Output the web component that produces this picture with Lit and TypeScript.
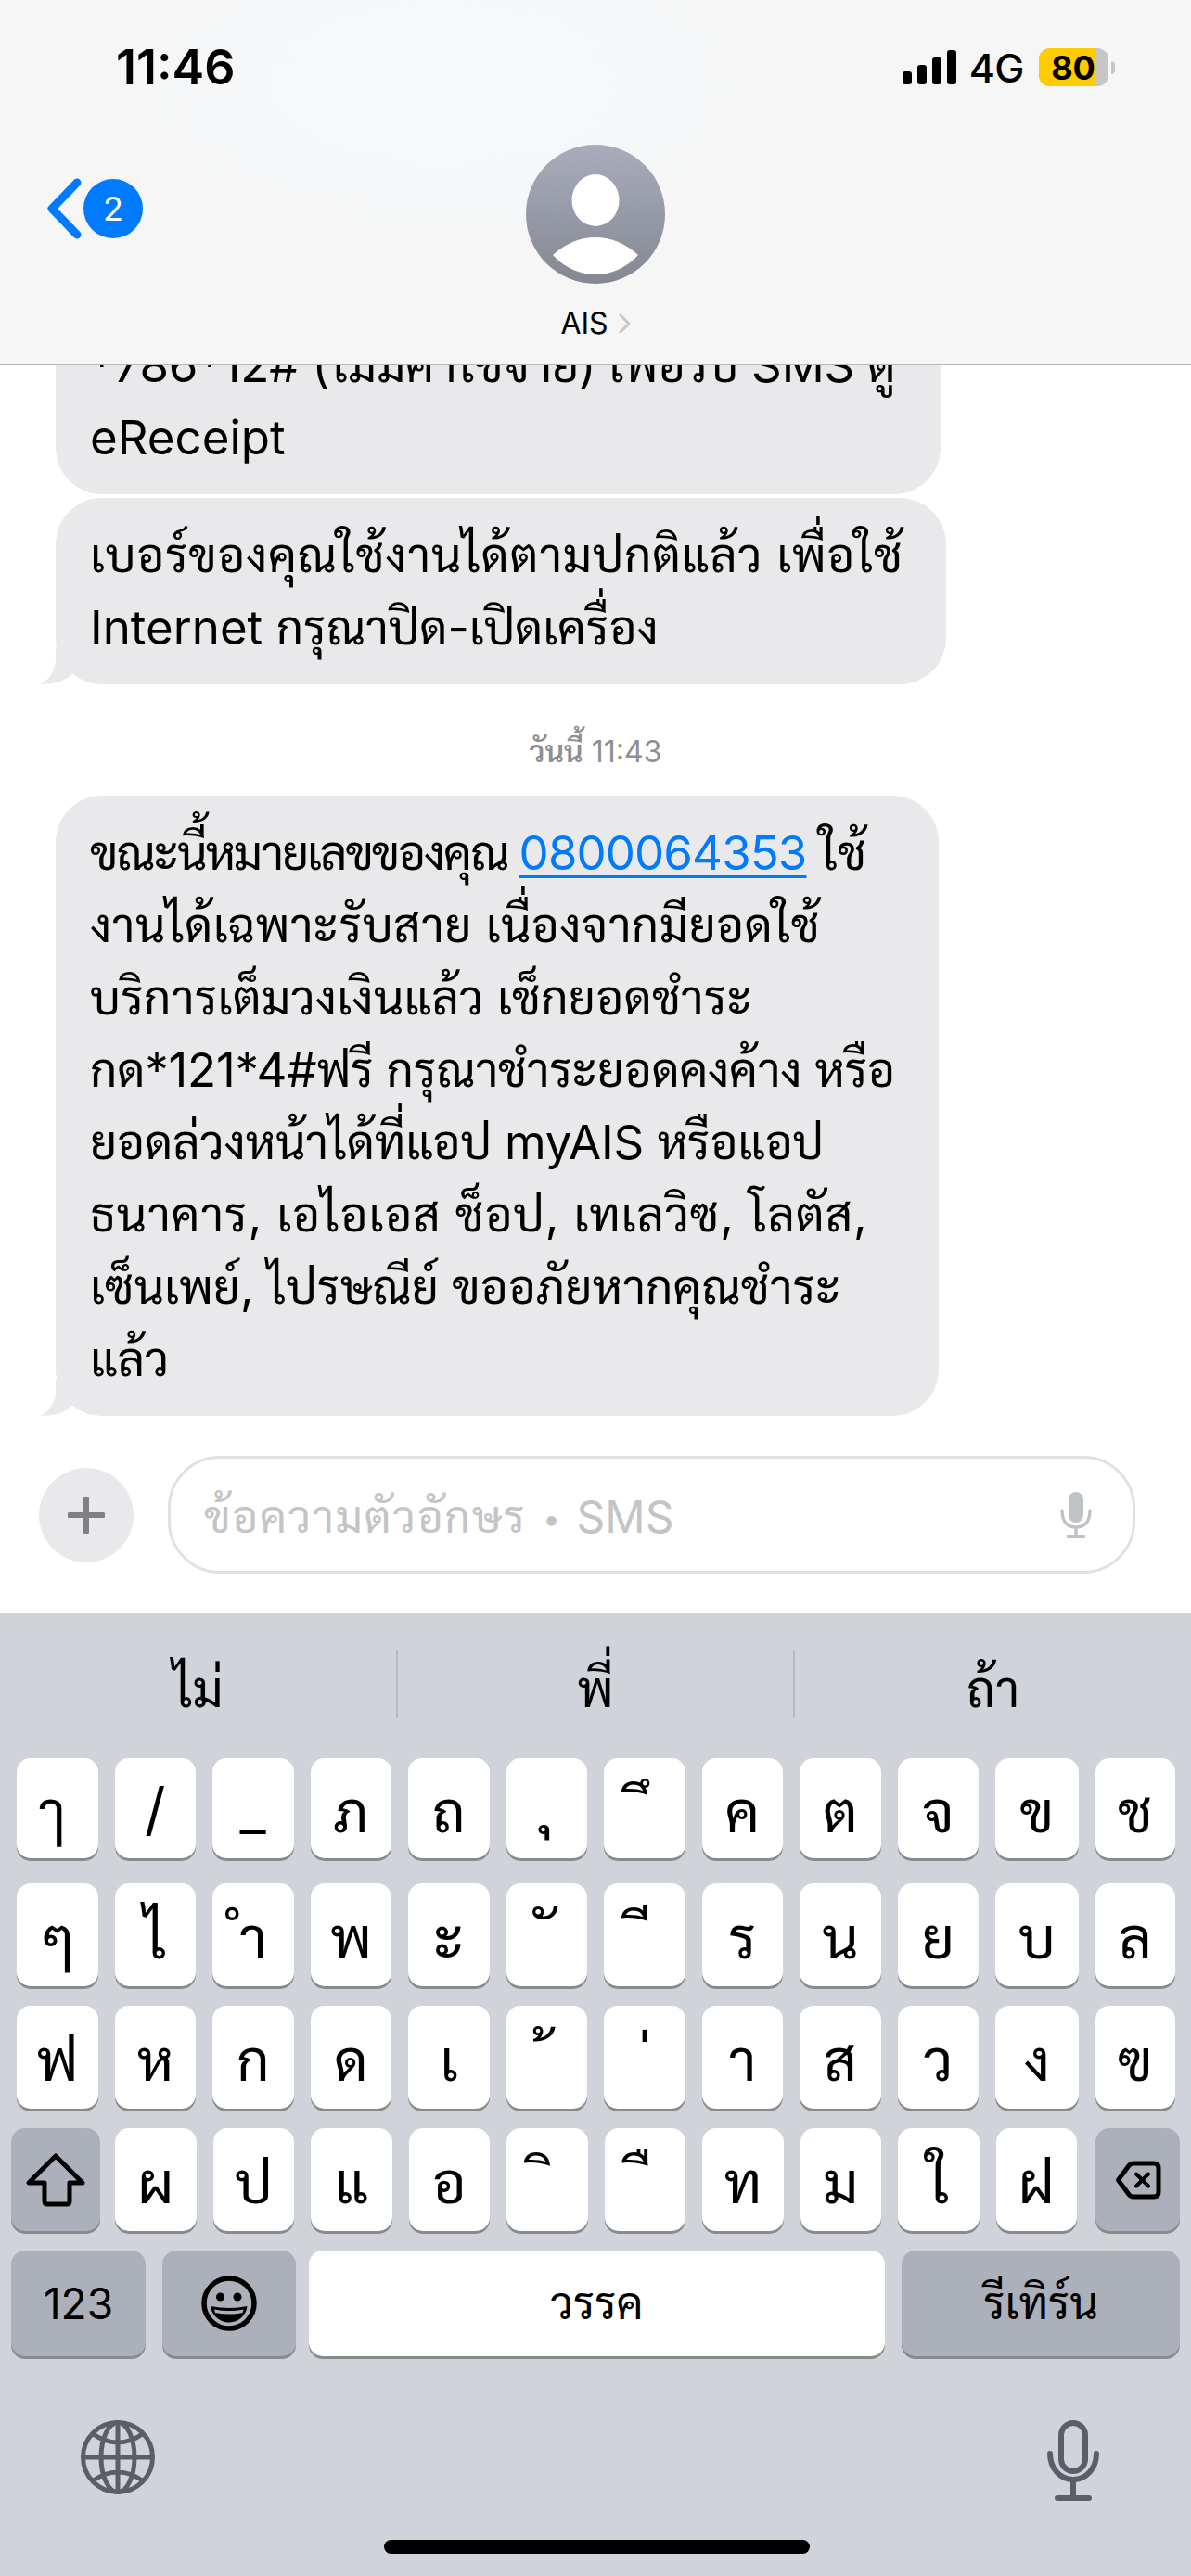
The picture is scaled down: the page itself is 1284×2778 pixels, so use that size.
import { css, html, LitElement, svg } from 'lit'
import { customElement } from 'lit/decorators.js'

const MARK = '\u00a0'
const BELOW = MARK + 'ุ'

const ROW_1 = ['ๅ', '/', '_', 'ภ', 'ถ', BELOW, MARK + 'ึ', 'ค', 'ต', 'จ', 'ข', 'ช']
const ROW_2 = ['ๆ', 'ไ', 'ำ', 'พ', 'ะ', MARK + 'ั', MARK + 'ี', 'ร', 'น', 'ย', 'บ', 'ล']
const ROW_3 = ['ฟ', 'ห', 'ก', 'ด', 'เ', MARK + '้', MARK + '่', 'า', 'ส', 'ว', 'ง', 'ฃ']
const ROW_4 = ['ผ', 'ป', 'แ', 'อ', MARK + 'ิ', MARK + 'ื', 'ท', 'ม', 'ใ', 'ฝ']

// [text, letter-spacing in px]: the fallback Thai font runs wider or narrower than the original per line
type Line = [string, number]

const FIRST_BUBBLE: Line[] = [
  ['*786*12# (ไม่มีค่าใช้จ่าย) เพื่อรับ SMS ดู', -0.15],
  ['eReceipt', 0],
]
const SECOND_BUBBLE: Line[] = [
  ['เบอร์ของคุณใช้งานได้ตามปกติแล้ว เพื่อใช้', 0.75],
  ['Internet กรุณาปิด-เปิดเครื่อง', 0],
]
const THIRD_BUBBLE: Line[] = [
  ['งานได้เฉพาะรับสาย เนื่องจากมียอดใช้', 0.45],
  ['บริการเต็มวงเงินแล้ว เช็กยอดชำระ', 0.25],
  ['กด*121*4#ฟรี กรุณาชำระยอดคงค้าง หรือ', -0.2],
  ['ยอดล่วงหน้าได้ที่แอป myAIS หรือแอป', -0.1],
  ['ธนาคาร, เอไอเอส ช็อป, เทเลวิซ, โลตัส,', 0.9],
  ['เซ็นเพย์, ไปรษณีย์ ขออภัยหากคุณชำระ', 0.1],
  ['แล้ว', 0],
]

const tail = html`<svg class="tail" width="60" height="40" viewBox="0 0 60 40">
  <path d="M17 0V13C17 26 9 36 0 40C14 40 27 37 36 28V0Z" fill="#e9e9eb" />
</svg>`

@customElement('app-root')
export class AppRoot extends LitElement {
  static styles = css`
    :host {
      display: block;
      width: 1284px;
      height: 2778px;
      overflow: hidden;
      background: #fff;
      color: #000;
      font-family: 'Inter', 'Sarabun', 'Noto Sans Thai Looped', sans-serif;
    }
    .page {
      display: flex;
      flex-direction: column;
      height: 2778px;
    }

    /* header */
    .header {
      flex: none;
      height: 394px;
      box-sizing: border-box;
      border-bottom: 1px solid #b9b9b9;
      background:
        radial-gradient(ellipse 420px 200px at 480px 90px, #f6f9fc 0%, rgb(246 249 252 / 0) 100%),
        #f6f6f6;
    }
    .status {
      display: flex;
      align-items: center;
      justify-content: space-between;
      height: 41px;
      padding: 52px 82px 0 125px;
    }
    .clock {
      font-size: 52px;
      font-weight: 600;
    }
    .status-right {
      display: flex;
      align-items: center;
    }
    .net {
      margin: 0 16px 0 14px;
      font-size: 43px;
      font-weight: 500;
      letter-spacing: -0.5px;
    }
    .battery {
      position: relative;
      display: flex;
      width: 75px;
      height: 41px;
      border-radius: 12px;
      overflow: hidden;
      background: #c6c6c6;
    }
    .battery-level {
      display: flex;
      align-items: center;
      justify-content: center;
      width: 60px;
      padding-left: 14px;
      box-sizing: border-box;
      background: #ffcc00;
      font-size: 36px;
      font-weight: 700;
    }
    .battery-nub {
      width: 4px;
      height: 14px;
      margin-left: 3px;
      border-radius: 0 7px 7px 0;
      background: #c6c6c6;
    }
    .nav {
      display: grid;
      grid-template-columns: 1fr auto 1fr;
      margin-top: 63px;
    }
    .back {
      display: flex;
      align-items: center;
      gap: 1px;
      height: 64px;
      margin-top: 37px;
      padding-left: 51px;
    }
    .badge {
      display: flex;
      align-items: center;
      justify-content: center;
      width: 64px;
      height: 64px;
      border-radius: 50%;
      background: #007aff;
      color: #fff;
      font-size: 36px;
    }
    .contact {
      display: flex;
      flex-direction: column;
      align-items: center;
    }
    .contact-name {
      display: flex;
      align-items: center;
      gap: 11px;
      margin-top: 24px;
      font-size: 32px;
      line-height: 38px;
    }

    /* messages */
    .messages {
      flex: none;
      height: 1133px;
      box-sizing: border-box;
      display: flex;
      flex-direction: column;
      justify-content: flex-end;
      align-items: flex-start;
      overflow: hidden;
      padding-left: 60px;
    }
    .bubble {
      position: relative;
      flex: none;
      box-sizing: border-box;
      padding: 23px 0 22px 37px;
      border-radius: 50px;
      background: #e9e9eb;
      font-size: 51px;
      line-height: 78px;
      white-space: nowrap;
    }
    .bubble + .bubble {
      margin-top: 4px;
    }
    .line {
      display: block;
    }
    .tail {
      position: absolute;
      left: -17px;
      bottom: 0;
    }
    .date {
      align-self: stretch;
      margin: 47px 0 21px -60px;
      text-align: center;
      font-size: 32px;
      line-height: 52px;
      color: #8e8e93;
    }
    .date b {
      font-weight: 600;
    }
    .tight {
      letter-spacing: -2px;
    }
    .link {
      color: #007aff;
      letter-spacing: -0.9px;
      text-decoration: underline;
      text-decoration-thickness: 3px;
      text-underline-offset: 6px;
    }

    /* composer */
    .composer {
      flex: none;
      display: flex;
      align-items: center;
      gap: 37px;
      height: 127px;
      margin: 43px 60px 43px 42px;
    }
    .plus {
      flex: none;
      display: flex;
      align-items: center;
      justify-content: center;
      width: 102px;
      height: 102px;
      border-radius: 50%;
      background: #e9e9eb;
    }
    .field {
      flex: 1;
      display: flex;
      align-items: center;
      justify-content: space-between;
      height: 127px;
      box-sizing: border-box;
      padding: 0 44px 0 36px;
      border: 3px solid #e1e1e3;
      border-radius: 56px;
      font-size: 48px;
      color: #c4c4c7;
    }
    .hint {
      letter-spacing: 1.6px;
    }
    .dot {
      margin: 0 4px;
      font-size: 34px;
      vertical-align: 3px;
    }

    /* keyboard */
    .keyboard {
      flex: 1;
      position: relative;
      background: #d0d3da;
    }
    .suggestions {
      display: grid;
      grid-template-columns: 427px 428px 1fr;
      align-items: center;
      height: 74px;
      padding: 39px 0 43px;
    }
    .suggestion {
      display: flex;
      align-items: center;
      justify-content: center;
      height: 70px;
      padding-top: 4px;
      font-size: 54px;
    }
    .suggestion + .suggestion {
      border-left: 2px solid #b6b9c0;
    }
    .row {
      display: grid;
      grid-template-columns: repeat(10, 87.5px) 89.5px 86.5px;
      column-gap: 18px;
      height: 111px;
      margin-bottom: 21px;
      padding-left: 18px;
    }
    .row.first {
      height: 108px;
      margin-bottom: 27px;
    }
    .key {
      display: flex;
      align-items: center;
      justify-content: center;
      border-radius: 15px;
      background: #fff;
      box-shadow: 0 3px 0 #898a8d;
      font-size: 62px;
    }
    .key.dark {
      background: #abb0bb;
    }
    .key.below {
      padding-bottom: 24px;
    }
    .row.wide {
      grid-template-columns: 94px repeat(10, 87.5px) 93px;
      padding-left: 12px;
    }
    .shift {
      margin-right: -2px;
    }
    .delete {
      margin-left: 2px;
    }
    .row.bottom {
      display: flex;
      gap: 18px;
      height: 114px;
      margin-bottom: 0;
      padding-left: 12px;
    }
    .numbers {
      width: 145px;
      font-size: 46px;
    }
    .emoji {
      width: 144px;
    }
    .space {
      width: 621px;
      margin-left: -4px;
      padding-bottom: 6px;
      font-size: 48px;
    }
    .enter {
      width: 300px;
      padding-bottom: 6px;
      font-size: 48px;
    }
    .extras {
      display: flex;
      align-items: flex-start;
      justify-content: space-between;
      padding: 69px 97px 0 87px;
    }
    .home {
      position: absolute;
      left: 414px;
      bottom: 24px;
      width: 459px;
      height: 15px;
      border-radius: 8px;
      background: #000;
    }
  `

  private renderSignal() {
    return html`<svg width="58" height="37" viewBox="0 0 58 37">
      <rect x="0" y="23" width="10" height="14" rx="3" />
      <rect x="16" y="16" width="10" height="21" rx="3" />
      <rect x="32" y="8" width="10" height="29" rx="3" />
      <rect x="48" y="0" width="10" height="37" rx="3" />
    </svg>`
  }

  private renderHeader() {
    return html`<header class="header">
      <div class="status">
        <span class="clock">11:46</span>
        <div class="status-right">
          ${this.renderSignal()}
          <span class="net">4G</span>
          <div class="battery"><div class="battery-level">80</div></div>
          <div class="battery-nub"></div>
        </div>
      </div>
      <div class="nav">
        <div class="back">
          <svg width="38" height="66" viewBox="0 0 38 66">
            <path d="M32 5L5 33L32 61" fill="none" stroke="#007aff" stroke-width="9" stroke-linecap="round" stroke-linejoin="round" />
          </svg>
          <span class="badge">2</span>
        </div>
        <div class="contact">
          <svg width="150" height="150" viewBox="0 0 150 150">
            <defs>
              <linearGradient id="avatar" x1="0" y1="0" x2="0" y2="1">
                <stop offset="0" stop-color="#a9adbb" />
                <stop offset="1" stop-color="#848892" />
              </linearGradient>
            </defs>
            <circle cx="75" cy="75" r="75" fill="url(#avatar)" />
            <ellipse cx="75" cy="60" rx="25.5" ry="28" fill="#fff" />
            <path d="M29 119C42 107 58 100 75 100C92 100 108 107 121 119C108 133 92 140 75 140C58 140 42 133 29 119Z" fill="#fff" />
          </svg>
          <div class="contact-name">
            AIS
            <svg width="13" height="22" viewBox="0 0 13 22">
              <path d="M2 2L11 11L2 20" fill="none" stroke="#c8c8c8" stroke-width="3" stroke-linecap="round" stroke-linejoin="round" />
            </svg>
          </div>
        </div>
        <div></div>
      </div>
    </header>`
  }

  private renderLines(lines: Line[]) {
    return lines.map(([text, spacing]) => html`<span class="line" style="letter-spacing:${spacing}px">${text}</span>`)
  }

  private renderMessages() {
    return html`<section class="messages">
      <div class="bubble" style="width:954px">${this.renderLines(FIRST_BUBBLE)}</div>
      <div class="bubble" style="width:960px">${this.renderLines(SECOND_BUBBLE)}${tail}</div>
      <div class="date"><b>วันนี้</b> 11:43</div>
      <div class="bubble" style="width:952px">
        <span class="line"><span class="tight">ขณะนี้หมายเลขของคุณ </span><span class="link">0800064353</span> ใช้</span>
        ${this.renderLines(THIRD_BUBBLE)}${tail}
      </div>
    </section>`
  }

  private renderComposer() {
    return html`<div class="composer">
      <div class="plus">
        <svg width="40" height="40" viewBox="0 0 40 40">
          <path d="M20 2V38M2 20H38" stroke="#7f8086" stroke-width="6" stroke-linecap="round" />
        </svg>
      </div>
      <div class="field">
        <span><span class="hint">ข้อความตัวอักษร</span> <span class="dot">•</span> SMS</span>
        <svg width="34" height="50" viewBox="0 0 34 50">
          <rect x="9" y="0" width="16" height="33" rx="8" fill="#bfc2c7" />
          <path d="M2 20C2 32 8 38 17 38C26 38 32 32 32 20M17 38V47" fill="none" stroke="#bfc2c7" stroke-width="3.5" stroke-linecap="round" />
          <path d="M7 48H27" stroke="#bfc2c7" stroke-width="4" />
        </svg>
      </div>
    </div>`
  }

  private renderKeys(keys: string[]) {
    return keys.map((key) => html`<div class="key ${key === BELOW ? 'below' : ''}">${key}</div>`)
  }

  private renderKeyboard() {
    const shift = html`<svg width="66" height="60" viewBox="0 0 66 60">
      <path d="M33 4L4 33H21V53Q21 56 24 56H45Q48 56 48 53V33H62Z" fill="none" stroke="#000" stroke-width="5" stroke-linejoin="round" />
    </svg>`
    const backspace = html`<svg width="50" height="42" viewBox="0 0 50 42">
      <path d="M3.5 21L15 5.5Q17 3 20 3H42Q47 3 47 8V34Q47 39 42 39H20Q17 39 15 36.5Z" fill="none" stroke="#000" stroke-width="5" stroke-linejoin="round" />
      <path d="M23 14.5L36 27.500M36 14.500L23 27.500" stroke="#000" stroke-width="4" stroke-linecap="round" />
    </svg>`
    const emoji = html`<svg width="60" height="60" viewBox="0 0 60 60">
      <circle cx="30" cy="30" r="27" fill="none" stroke="#000" stroke-width="5.5" />
      <circle cx="20.500" cy="23" r="4.500" />
      <circle cx="39" cy="23" r="4.500" />
      <path d="M10 33Q30 37 49.500 33C48.500 43 40 50.500 30 50.500C20 50.500 11 43 10 33Z" />
      <path d="M14 36.500Q30 39.500 45.500 36.500L44.500 40Q30 43 15 40Z" fill="#abb0bb" />
    </svg>`
    const globe = svg`<g fill="none" stroke="#595e67" stroke-width="5">
      <circle cx="40" cy="40" r="37.500" />
      <ellipse cx="40" cy="40" rx="18" ry="37.500" />
      <path d="M40 2.500V77.500M2.500 40H77.500M12 14Q40 34 68 14M12 66Q40 46 68 66" />
    </g>`
    return html`<div class="keyboard">
      <div class="suggestions">
        <div class="suggestion">ไม่</div>
        <div class="suggestion">พี่</div>
        <div class="suggestion">ถ้า</div>
      </div>
      <div class="row first">${this.renderKeys(ROW_1)}</div>
      <div class="row">${this.renderKeys(ROW_2)}</div>
      <div class="row">${this.renderKeys(ROW_3)}</div>
      <div class="row wide">
        <div class="key dark shift">${shift}</div>
        ${this.renderKeys(ROW_4)}
        <div class="key dark delete">${backspace}</div>
      </div>
      <div class="row bottom">
        <div class="key dark numbers">123</div>
        <div class="key dark emoji">${emoji}</div>
        <div class="key space">วรรค</div>
        <div class="key dark enter">รีเทิร์น</div>
      </div>
      <div class="extras">
        <svg width="80" height="80" viewBox="0 0 80 80">${globe}</svg>
        <svg width="60" height="88" viewBox="0 0 60 88">
          <g fill="none" stroke="#595e67" stroke-width="6" stroke-linecap="round">
            <rect x="17" y="3" width="26" height="52" rx="13" />
            <path d="M5 36C5 52 16 64 30 64C44 64 55 52 55 36M30 64V83M13 84H47" />
          </g>
        </svg>
      </div>
      <div class="home"></div>
    </div>`
  }

  render() {
    return html`<div class="page">
      ${this.renderHeader()} ${this.renderMessages()} ${this.renderComposer()} ${this.renderKeyboard()}
    </div>`
  }
}
